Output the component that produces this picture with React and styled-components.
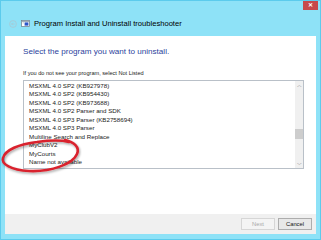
import styled, { createGlobalStyle } from "styled-components";

const Global = createGlobalStyle`
  html, body {
    margin: 0;
    padding: 0;
    width: 321px;
    height: 240px;
    overflow: hidden;
    font-family: "Liberation Sans", Arial, sans-serif;
  }
`;

const Window = styled.div`
  position: relative;
  width: 321px;
  height: 240px;
  box-sizing: border-box;
  background: #8ee2f7;
  border: 1px solid #5ccbec;
  display: flex;
  flex-direction: column;
`;

const TitleBar = styled.div`
  height: 35px;
  display: flex;
  flex-direction: column;
`;

const TopRow = styled.div`
  display: flex;
  justify-content: flex-end;
  padding-right: 2px;
`;

const CloseButton = styled.div`
  width: 15px;
  height: 9px;
  background: #c74a4a;
  color: #fff;
  font-size: 6px;
  line-height: 9px;
  text-align: center;
  font-weight: bold;
`;

const Caption = styled.div`
  display: flex;
  align-items: center;
  gap: 4px;
  padding: 9px 0 0 8px;
  color: #000;
  font-size: 7.6px;
`;

const Client = styled.div`
  flex: 1;
  margin: 0 4px 5px 4px;
  background: #fff;
  display: flex;
  flex-direction: column;
`;

const Body = styled.div`
  flex: 1;
  padding: 10px 12px 0 18px;
  display: flex;
  flex-direction: column;
`;

const Heading = styled.div`
  color: #2b3f9c;
  font-size: 8.1px;
  line-height: 12px;
`;

const Hint = styled.div`
  margin-top: 11px;
  font-size: 5.6px;
  line-height: 8px;
  color: #222;
`;

const ListBox = styled.div`
  margin-top: 3px;
  height: 89px;
  box-sizing: border-box;
  border: 1px solid #b9c0c8;
  display: flex;
`;

const Items = styled.div`
  flex: 1;
  padding: 0.5px 0 0 5px;
  overflow: hidden;
`;

const Item = styled.div`
  font-size: 6.2px;
  line-height: 8.55px;
  color: #222;
  white-space: nowrap;
`;

const ScrollBar = styled.div`
  width: 8px;
  background: #f0f0f0;
  display: flex;
  flex-direction: column;
  align-items: center;
`;

const Arrow = styled.div`
  font-size: 5px;
  line-height: 8px;
  color: #606060;
  height: 8px;
`;

const Track = styled.div`
  flex: 1;
  width: 100%;
  display: flex;
  flex-direction: column;
  padding-top: ${(p) => p.$offset}px;
  box-sizing: border-box;
`;

const Thumb = styled.div`
  height: 10px;
  background: #cdcdcd;
`;

const Footer = styled.div`
  height: 20px;
  background: #f0f0f0;
  display: flex;
  justify-content: flex-end;
  align-items: center;
  gap: 3px;
  padding-right: 4px;
`;

const Button = styled.div`
  width: 34px;
  height: 12px;
  box-sizing: border-box;
  border: 1px solid ${(p) => (p.$disabled ? "#d6d6d6" : "#adadad")};
  background: ${(p) => (p.$disabled ? "#f4f4f4" : "#e8e8e8")};
  color: ${(p) => (p.$disabled ? "#a8a8a8" : "#111")};
  font-size: 5.8px;
  line-height: 10px;
  text-align: center;
`;

const Annotation = styled.svg`
  position: absolute;
  left: 0;
  top: 136px;
  pointer-events: none;
`;

const programs = [
  "MSXML 4.0 SP2 (KB927978)",
  "MSXML 4.0 SP2 (KB954430)",
  "MSXML 4.0 SP2 (KB973688)",
  "MSXML 4.0 SP2 Parser and SDK",
  "MSXML 4.0 SP3 Parser (KB2758694)",
  "MSXML 4.0 SP3 Parser",
  "Multiline Search and Replace",
  "MyClubV2",
  "MyCourts",
  "Name not available",
];

function BackIcon() {
  return (
    <svg width="8" height="8" viewBox="0 0 8 8">
      <circle cx="4" cy="4" r="3.4" fill="none" stroke="#a9c6d0" strokeWidth="0.8" />
      <path d="M5.6 4H2.6M3.9 2.7L2.6 4l1.3 1.3" fill="none" stroke="#a9c6d0" strokeWidth="0.8" />
    </svg>
  );
}

function AppIcon() {
  return (
    <svg width="9" height="7" viewBox="0 0 9 7">
      <rect x="0.5" y="0.5" width="8" height="6" fill="#fff" stroke="#6b7b88" strokeWidth="0.7" />
      <rect x="0.5" y="0.5" width="8" height="1.3" fill="#8a9aa8" />
      <rect x="3.6" y="2.4" width="3.8" height="3.2" fill="#2a55c9" />
      <rect x="1.5" y="2.6" width="1.5" height="0.6" fill="#9aa" />
    </svg>
  );
}

export default function App() {
  return (
    <>
      <Global />
      <Window>
        <TitleBar>
          <TopRow>
            <CloseButton>✕</CloseButton>
          </TopRow>
          <Caption>
            <BackIcon />
            <AppIcon />
            <span>Program Install and Uninstall troubleshooter</span>
          </Caption>
        </TitleBar>
        <Client>
          <Body>
            <Heading>Select the program you want to uninstall.</Heading>
            <Hint>If you do not see your program, select Not Listed</Hint>
            <ListBox>
              <Items>
                {programs.map((name) => (
                  <Item key={name}>{name}</Item>
                ))}
              </Items>
              <ScrollBar>
                <Arrow>︿</Arrow>
                <Track $offset={40}>
                  <Thumb />
                </Track>
                <Arrow>﹀</Arrow>
              </ScrollBar>
            </ListBox>
          </Body>
          <Footer>
            <Button $disabled>Next</Button>
            <Button>Cancel</Button>
          </Footer>
        </Client>
        <Annotation width="90" height="40" viewBox="0 0 90 40">
          <defs>
            <filter id="sh" x="-20%" y="-40%" width="140%" height="180%">
              <feDropShadow dx="1" dy="1.5" stdDeviation="1" floodColor="#000" floodOpacity="0.35" />
            </filter>
          </defs>
          <path
            d="M64 3 C73 5 79 10 76 17 C72 27 50 35 28 34 C10 33 0 27 2 21 C4 13 18 7 36 5 C50 3 60 3 68 5"
            fill="none"
            stroke="#d9232d"
            strokeWidth="2.6"
            strokeLinecap="round"
            filter="url(#sh)"
          />
        </Annotation>
      </Window>
    </>
  );
}
